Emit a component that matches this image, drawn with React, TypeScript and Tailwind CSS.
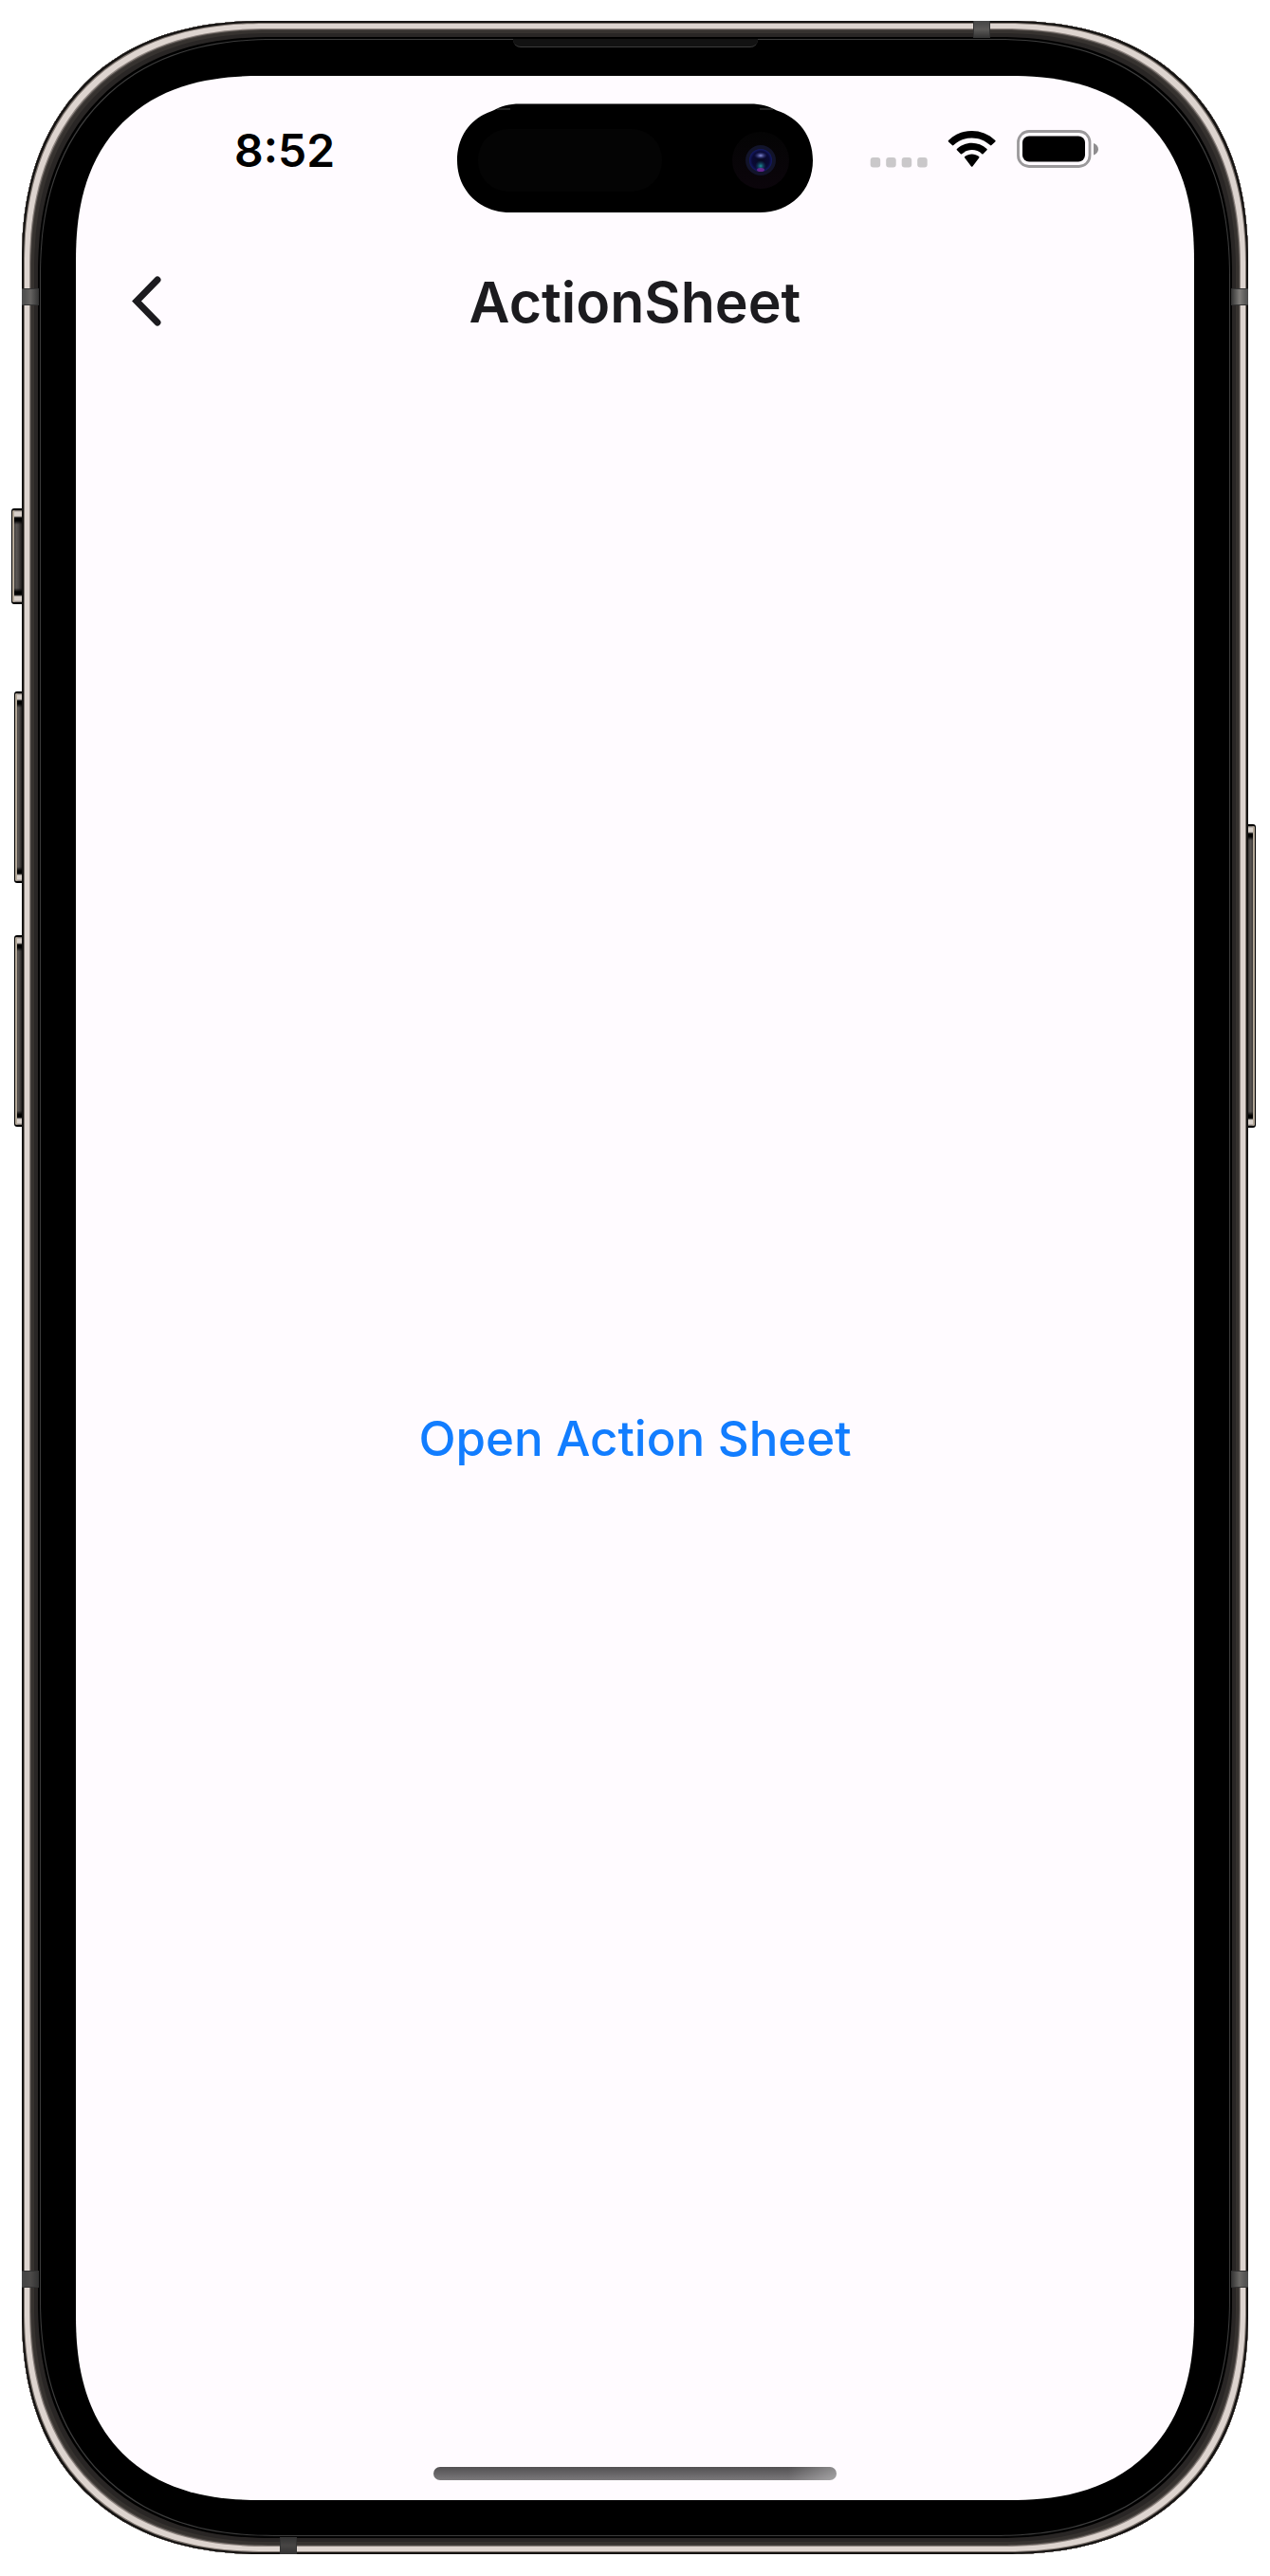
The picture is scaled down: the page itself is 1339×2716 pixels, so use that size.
import React from "react";

function SideButton({ className, right = false }: { className: string; right?: boolean }) {
  return (
    <div
      aria-hidden="true"
      className={
        "absolute border-y-2 border-black bg-[linear-gradient(to_bottom,#6b6460_0,#d8d0ca_2px,#d8d0ca_6px,#000_8px,#000_11px,transparent_15px,transparent_calc(100%-15px),#000_calc(100%-11px),#000_calc(100%-8px),#d8d0ca_calc(100%-6px),#d8d0ca_calc(100%-2px),#6b6460_100%),linear-gradient(to_right,#2a2726,#5a5654_40%,#4a4644_60%,#141212)] " +
        (right
          ? "rounded-r-[3px] border-r border-r-black shadow-[inset_-2px_0_0_#b5a999] "
          : "rounded-l-[3px] border-l border-l-black shadow-[inset_2px_0_0_#b5a999] ") +
        className
      }
    />
  );
}

function DynamicIsland() {
  return (
    <svg viewBox="0 0 375 115" className="h-[115px] w-[375px]" aria-hidden="true">
      <defs>
        <linearGradient id="ring" x1="0" y1="0" x2="0" y2="1">
          <stop offset="0" stopColor="#040404" />
          <stop offset="1" stopColor="#0b050b" />
        </linearGradient>
        <radialGradient id="lens">
          <stop offset="0" stopColor="#080820" />
          <stop offset="0.75" stopColor="#0a0a35" />
          <stop offset="1" stopColor="#141a66" />
        </radialGradient>
        <radialGradient id="glintTop">
          <stop offset="0" stopColor="#8b93e0" />
          <stop offset="1" stopColor="#2a3080" stopOpacity="0" />
        </radialGradient>
        <radialGradient id="glintBottom">
          <stop offset="0" stopColor="#1f8f96" />
          <stop offset="1" stopColor="#0c3a60" stopOpacity="0" />
        </radialGradient>
      </defs>
      <path d="M38 7.500C46 3 55 0.500 66 0.500H309C320 0.500 329 3 337 7.500C360 15 375 34 375 60C375 92 351 115 319 115H56C24 115 0 92 0 60C0 34 15 15 38 7.500Z" fill="#000" />
      <path d="M42 6H56M319 6H333" stroke="#666" strokeWidth="1" opacity="0.7" />
      <rect x="22" y="27" width="194" height="66" rx="32" fill="#040404" />
      <circle cx="320" cy="60" r="30" fill="url(#ring)" />
      <circle cx="320" cy="60" r="16" fill="#12142a" />
      <circle cx="320" cy="60" r="12" fill="url(#lens)" />
      <ellipse cx="320" cy="55" rx="7" ry="4" fill="url(#glintTop)" />
      <circle cx="320" cy="66" r="6" fill="url(#glintBottom)" />
      <ellipse cx="320" cy="70" rx="4" ry="2" fill="#8a2aa8" opacity="0.7" />
    </svg>
  );
}

function StatusIcons() {
  return (
    <svg viewBox="0 0 241 41" className="h-[41px] w-[241px]" role="img" aria-label="No signal, Wi-Fi, full battery">
      <g fill="#cac8ca">
        <rect x="0.700" y="29" width="10.500" height="10.500" rx="3" />
        <rect x="17.200" y="29" width="10.500" height="10.500" rx="3" />
        <rect x="33.700" y="29" width="10.500" height="10.500" rx="3" />
        <rect x="50.200" y="29" width="10.500" height="10.500" rx="3" />
      </g>
      <g transform="translate(81.500 0.800)" fill="#000">
        <path d="M26.200 7.600C33.400 7.600 40.300 10.300 45.500 15.300C45.900 15.700 46.500 15.700 46.900 15.300L50.800 11.600C51.200 11.100 51.300 10.500 50.800 10.100C37 -3.200 15.400 -3.200 1.500 10.100C1.100 10.500 1.100 11.100 1.500 11.600L5.400 15.300C5.800 15.700 6.400 15.700 6.900 15.300C12.100 10.300 19 7.600 26.200 7.600Z" />
        <path d="M26.200 20.300C30.100 20.300 33.900 21.800 36.700 24.400C37.100 24.800 37.700 24.800 38.100 24.400L42 20.500C42.400 20.100 42.400 19.500 42 19.100C33.100 10.800 19.300 10.800 10.400 19.100C10 19.500 10 20.100 10.400 20.500L14.300 24.400C14.700 24.800 15.300 24.800 15.700 24.400C18.600 21.800 22.300 20.300 26.200 20.300Z" />
        <path d="M33.700 28.700C34.100 28.300 34.100 27.700 33.700 27.300C29.400 23.700 23 23.700 18.700 27.300C18.300 27.700 18.300 28.300 18.700 28.700L25.500 37.600C25.900 38 26.500 38 26.900 37.600Z" />
      </g>
      <rect x="156.500" y="1.500" width="75.500" height="37" rx="11.500" fill="none" stroke="#9b999b" strokeWidth="2.800" />
      <rect x="161" y="6.500" width="66" height="27" rx="7" fill="#000" />
      <path d="M236 14C239 15 241 17.500 241 20.300C241 23.200 239 25.600 236 26.600Z" fill="#8f8d8f" />
    </svg>
  );
}

export default function App() {
  return (
    <div className="flex min-h-screen w-full flex-col bg-white px-[23px] pt-[22px] pb-[23px] font-['Inter',sans-serif]">
      <div className="relative flex flex-1 flex-col">
        <SideButton className="top-[514px] -left-[11px] h-[101px] w-[12px]" />
        <SideButton className="top-[707px] -left-[8px] h-[202px] w-[9px]" />
        <SideButton className="top-[964px] -left-[8px] h-[202px] w-[9px]" />
        <SideButton right className="top-[847px] -right-[8px] h-[320px] w-[9px]" />

        <div className="relative flex flex-1 flex-col overflow-hidden rounded-[218px] bg-black p-[57px] pt-[58px] shadow-[inset_0_0_0_2px_#151312,inset_0_0_0_3px_#7d746e,inset_0_0_0_8px_#ddd4cf,inset_0_0_0_9px_#8e8580,inset_0_0_0_10px_#4a4542,inset_0_0_0_13px_#36322f,inset_0_0_0_17px_#292625,inset_0_0_0_19px_#000,inset_0_0_0_20px_#3c3c3c] supports-[corner-shape:superellipse(1.2)]:rounded-[254px] [corner-shape:superellipse(1.2)]">
          <div aria-hidden="true" className="absolute top-[282px] left-0 h-[18px] w-[18px] border-y border-[#333] bg-linear-to-r from-[#4a4a4a] via-[#666462] to-[#333]" />
          <div aria-hidden="true" className="absolute top-[282px] right-0 h-[18px] w-[18px] border-y border-[#333] bg-linear-to-l from-[#4a4a4a] via-[#807e7b] to-[#333]" />
          <div aria-hidden="true" className="absolute bottom-[281px] left-0 h-[18px] w-[18px] border-y border-[#333] bg-linear-to-r from-[#444] via-[#4c4a49] to-[#333]" />
          <div aria-hidden="true" className="absolute right-0 bottom-[281px] h-[18px] w-[18px] border-y border-[#333] bg-linear-to-l from-[#4a4a4a] via-[#6c6a67] to-[#333]" />
          <div aria-hidden="true" className="absolute top-0 right-[272px] h-[18px] w-[18px] border-x border-[#333] bg-linear-to-b from-[#444] via-[#5c5a58] to-[#333]" />
          <div aria-hidden="true" className="absolute bottom-0 left-[272px] h-[18px] w-[18px] border-x border-[#333] bg-linear-to-t from-[#333] via-[#484645] to-[#333]" />
          <div aria-hidden="true" className="absolute top-[19px] left-1/2 h-[9px] w-[258px] -translate-x-1/2 rounded-b-[8px] border-b border-[#3c3c3c] bg-[#121212]" />

          <div className="flex flex-1 flex-col overflow-hidden rounded-[164px] bg-[#fffbff] supports-[corner-shape:superellipse(1.2)]:rounded-[195px] [corner-shape:superellipse(1.25)]">
            <div className="grid grid-cols-[1fr_375px_1fr] pt-[29px]">
              <div className="flex justify-center pt-[21px] pl-[38px]">
                <time className="text-[48px] leading-[58px] font-semibold text-black">8:52</time>
              </div>
              <DynamicIsland />
              <div className="flex justify-end pt-[28px] pr-[101px]">
                <StatusIcons />
              </div>
            </div>

            <header className="grid h-[189px] grid-cols-[1fr_auto_1fr] items-center px-[57px]">
              <button type="button" aria-label="Back" className="size-[60px] justify-self-start">
                <svg viewBox="0 0 60 60" className="size-[60px]" fill="none" stroke="#1c1b1f" strokeWidth="7" strokeLinecap="round">
                  <path d="M29 6L7 28.500L29 51" />
                </svg>
              </button>
              <h1 className="text-[59px] leading-[72px] font-semibold text-[#1c1b1f]">ActionSheet</h1>
            </header>

            <main className="flex flex-1 items-center justify-center pt-[20px]">
              <button type="button" className="rounded-full px-9 py-7 text-[51px] leading-[60px] font-medium text-[#127dff]">
                Open Action Sheet
              </button>
            </main>

            <div className="flex justify-center pb-[21px]">
              <div className="h-[14px] w-[425px] rounded-full bg-[linear-gradient(to_right,transparent_88%,#ffffff55),linear-gradient(to_bottom,#525052,#7b797b)]" />
            </div>
          </div>
        </div>
      </div>
    </div>
  );
}
